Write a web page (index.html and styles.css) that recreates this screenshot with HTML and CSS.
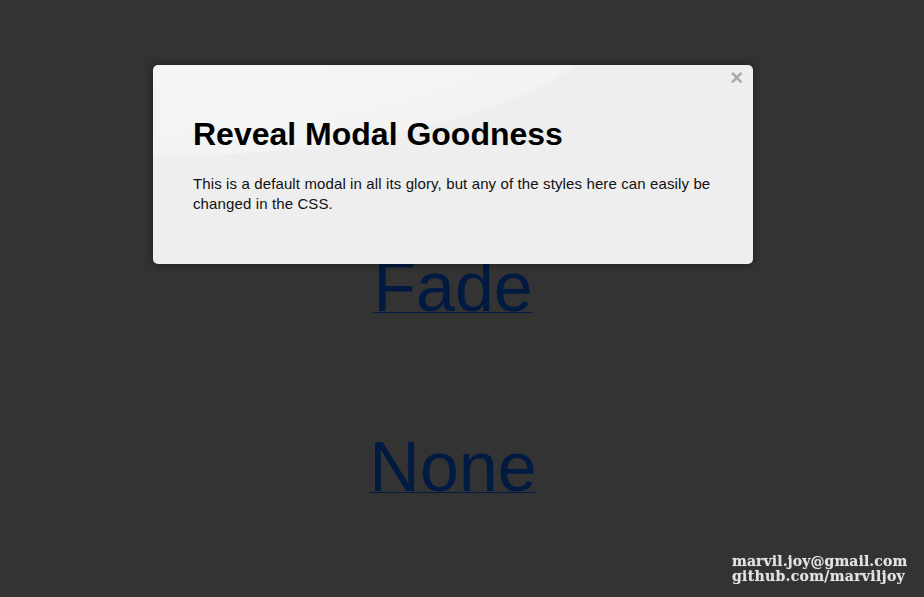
FILE: index.html
```html
<!DOCTYPE html>
<html lang="en">
<head>
<meta charset="utf-8">
<title>Reveal Modal</title>
<link rel="stylesheet" href="styles.css">
</head>
<body>
<main class="page">
  <a class="demo-link" href="#">Fade</a>
  <a class="demo-link" href="#">None</a>
</main>
<div class="credits">
  <div>marvil.joy@gmail.com</div>
  <div class="credits-line2">github.com/marviljoy</div>
</div>
<div class="modal">
  <a class="close-reveal" href="#">&#215;</a>
  <h2 class="modal-title">Reveal Modal Goodness</h2>
  <p class="modal-text">This is a default modal in all its glory, but any of the styles here can easily be changed in the CSS.</p>
</div>
</body>
</html>
```
FILE: styles.css
```css
html, body {
  margin: 0;
  padding: 0;
  height: 100%;
}
body {
  background: #333333;
  font-family: "Liberation Sans", Arial, sans-serif;
  overflow: hidden;
}
.page {
  display: flex;
  flex-direction: column;
  align-items: center;
  gap: 100px;
  padding: 247px 18px 0 0;
}
.demo-link {
  font-size: 70px;
  line-height: 80px;
  color: #011a42;
  text-decoration: underline;
  text-decoration-thickness: 1px;
  text-underline-offset: 1px;
}
.credits {
  position: fixed;
  left: 732px;
  bottom: 13px;
  text-align: left;
  font-family: "DejaVu Serif", "Liberation Serif", serif;
  font-weight: bold;
  font-size: 14px;
  line-height: 15px;
  color: #e2e2e2;
  letter-spacing: 0.1px;
  white-space: nowrap;
  text-shadow: 0 0 1px rgba(255,255,255,0.45);
}
.credits-line2 {
  letter-spacing: 0.3px;
}
.modal {
  position: absolute;
  top: 65px;
  left: 153px;
  width: 520px;
  padding: 53px 40px 50px;
  border-radius: 5px;
  background-color: #eeeeee;
  background-image: radial-gradient(ellipse 470px 160px at 0 -68px, rgba(255,255,255,0.5) 0%, rgba(255,255,255,0.3) 99%, rgba(255,255,255,0) 100%);
  background-repeat: no-repeat;
  box-shadow: 0 0 10px rgba(0,0,0,0.45);
}
.close-reveal {
  position: absolute;
  top: 2px;
  right: 10px;
  font-size: 22px;
  line-height: 22px;
  font-weight: bold;
  color: #aaaaaa;
  text-decoration: none;
}
.modal-title {
  margin: 0 0 24px;
  font-size: 32px;
  line-height: 32px;
  font-weight: bold;
  color: #000;
}
.modal-text {
  margin: 0;
  font-size: 15px;
  line-height: 20px;
  letter-spacing: 0.12px;
  color: #111;
}
```
